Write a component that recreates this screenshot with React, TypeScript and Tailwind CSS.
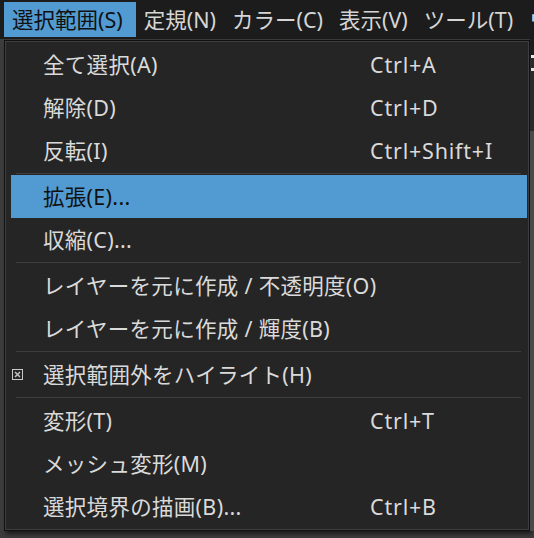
const font = {
  fontFamily: '"Noto Sans", "Noto Sans CJK JP", sans-serif',
};

type Item =
  | { kind: "sep" }
  | {
      kind: "item";
      label: string;
      shortcut?: string;
      active?: boolean;
      checked?: boolean;
    };

const items: Item[] = [
  { kind: "item", label: "全て選択(A)", shortcut: "Ctrl+A" },
  { kind: "item", label: "解除(D)", shortcut: "Ctrl+D" },
  { kind: "item", label: "反転(I)", shortcut: "Ctrl+Shift+I" },
  { kind: "sep" },
  { kind: "item", label: "拡張(E)...", active: true },
  { kind: "item", label: "収縮(C)..." },
  { kind: "sep" },
  { kind: "item", label: "レイヤーを元に作成 / 不透明度(O)" },
  { kind: "item", label: "レイヤーを元に作成 / 輝度(B)" },
  { kind: "sep" },
  { kind: "item", label: "選択範囲外をハイライト(H)", checked: true },
  { kind: "sep" },
  { kind: "item", label: "変形(T)", shortcut: "Ctrl+T" },
  { kind: "item", label: "メッシュ変形(M)" },
  { kind: "item", label: "選択境界の描画(B)...", shortcut: "Ctrl+B" },
];

const menus = ["定規(N)", "カラー(C)", "表示(V)", "ツール(T)"];

const CheckMark = () => (
  <svg width="11" height="11" viewBox="0 0 11 11" className="absolute left-[1px]">
    <rect x="0.5" y="0.5" width="10" height="10" fill="none" stroke="#c9c9c9" />
    <path d="M3 3 L8 8 M8 3 L3 8" stroke="#bdbdbd" strokeWidth="1.6" />
  </svg>
);

const MenuRow = ({ item }: { item: Item }) => {
  if (item.kind === "sep") {
    return (
      <div className="h-[3px] flex items-center pl-[5px] pr-[6px]">
        <div className="h-px w-full bg-[#3d3d3d]" />
      </div>
    );
  }
  return (
    <div
      className={
        item.active
          ? "relative h-[43px] flex items-center pl-[32px] bg-[#529bd2] text-[#111]"
          : "relative h-[43px] flex items-center pl-[32px] text-[#dadada]"
      }
    >
      {item.checked && <CheckMark />}
      <span className="w-[327px] whitespace-nowrap">{item.label}</span>
      {item.shortcut && (
        <span className="whitespace-nowrap tracking-[0.8px]">{item.shortcut}</span>
      )}
    </div>
  );
};

const App = () => {
  return (
    <div
      className="w-[534px] h-[538px] overflow-hidden bg-[#3b3b3b] text-[21.5px] leading-none tracking-[0.3px]"
      style={font}
    >
      <div className="h-[39px] bg-[#1c1c1c] flex items-start pt-[2px] pl-[4px] whitespace-nowrap overflow-hidden tracking-normal">
        <div className="h-[35px] flex items-center pl-[8px] pr-[13px] bg-[#529bd2] text-[#111]">
          選択範囲(S)
        </div>
        {menus.map((m) => (
          <div key={m} className="h-[35px] flex items-center px-[8px] text-[#d6d6d6]">
            {m}
          </div>
        ))}
        <div className="h-[35px] flex items-center pl-[8px] text-[#d6d6d6]">ウ</div>
      </div>

      <div className="flex">
        <div className="w-[4px] h-[492px] bg-[#3d3d3d]" />
        <div className="w-[526px] mt-[1px] border border-[#111] bg-[#252525] shadow-[2px_3px_4px_rgba(0,0,0,0.55)]">
          <div className="border border-[#3e3e3e] pl-[5px] pr-[1px] pt-[1px] pb-[1px]">
            {items.map((it, i) => (
              <MenuRow key={i} item={it} />
            ))}
          </div>
        </div>
        <div className="flex-1 flex flex-col">
          <div className="h-[16px] bg-[#1e1e1e]" />
          <div className="h-[3px] w-[3px] ml-[1px] bg-[#e8e8e8]" />
          <div className="h-[10px] bg-[#2a2a2a]" />
          <div className="h-[3px] w-[3px] ml-[1px] bg-[#e0e0e0]" />
          <div className="h-[60px] bg-[#2a2a2a]" />
          <div className="flex-1 bg-[#4a4a4a]" />
        </div>
      </div>
    </div>
  );
};

export default App;
